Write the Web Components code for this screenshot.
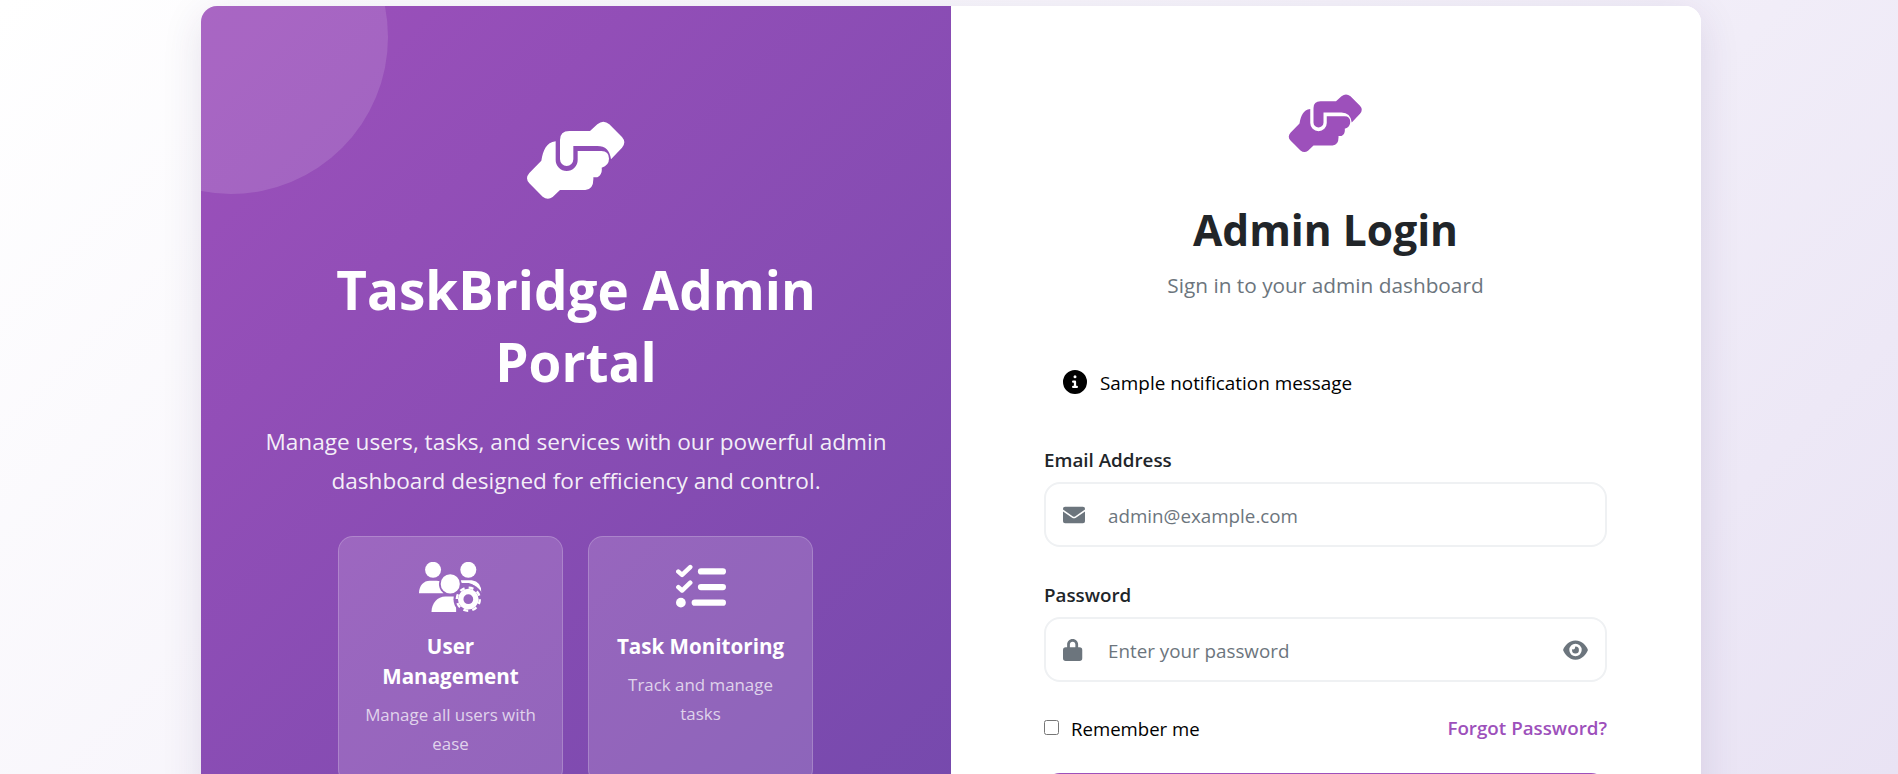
<!DOCTYPE html>
<html lang="en">
<head>
<meta charset="utf-8">
<title>TaskBridge Admin Login</title>
<style>
  html, body { height: 100%; margin: 0; overflow: hidden; }
  body {
    font-family: "Open Sans", "Noto Sans", sans-serif;
    background: linear-gradient(135deg, #ffffff 0%, #f5f2fa 50%, #e9e3f4 100%);
  }
</style>
</head>
<body>
<login-page>
  <brand-panel slot="brand">
    <feature-card title-text="User Management" desc="Manage all users with ease" icon="users"></feature-card>
    <feature-card title-text="Task Monitoring" desc="Track and manage tasks" icon="tasks"></feature-card>
  </brand-panel>
  <login-panel slot="login"></login-panel>
</login-page>

<script>
// 1. Shared icons
const icons = {
  handshake: `<svg viewBox="48 60 300 240" width="100%" height="100%" fill="currentColor">
    <path d="M150 120 Q150 93 178 93 H240 L262 73 Q280 58 298 73 L336 111 Q350 127 336 143 L303 178 Q298 138 262 138 H190 V178 A20 20 0 0 1 150 178 Z"/>
    <path d="M137 124 V180 A33 33 0 0 0 203 180 V153 H274 Q297 153 297 176 Q297 196 275 203 Q278 224 262 232 H250 Q252 268 226 270 H150 L128 291 Q113 302 98 290 L58 250 Q44 235 58 219 L94 182 C100 150 108 128 137 124 Z"/>
  </svg>`,
  users: `<svg viewBox="0 0 640 512" width="100%" height="100%" fill="currentColor">
    <mask id="m"><rect width="640" height="512" fill="#fff"/><circle cx="505" cy="381" r="152" fill="#000"/>
      <circle cx="320" cy="224" r="116" fill="#000"/></mask>
    <circle cx="144" cy="80" r="82"/><circle cx="505" cy="80" r="82"/>
    <g mask="url(#m)">
      <path d="M0 320 C0 240 50 192 110 192 H180 Q225 192 250 215 V320 Z"/>
      <path d="M400 188 H540 Q640 200 640 320 L610 320 Q590 230 510 215 H440 Z"/>
      <path d="M128 512 C128 420 190 352 270 352 H380 V512 Z"/>
    </g>
    <circle cx="320" cy="224" r="98"/>
    <circle cx="505" cy="381" r="78" fill="none" stroke="currentColor" stroke-width="56"/>
    <circle cx="505" cy="381" r="118" fill="none" stroke="currentColor" stroke-width="24" stroke-dasharray="50 42.7"/>
  </svg>`,
  tasks: `<svg viewBox="0 0 512 512" width="100%" height="100%" fill="currentColor">
    <g fill="none" stroke="currentColor" stroke-width="46" stroke-linecap="round" stroke-linejoin="round">
      <polyline points="24,98 62,132 146,52"/><polyline points="24,258 62,292 146,212"/>
    </g>
    <rect x="224" y="64" width="288" height="64" rx="32"/><rect x="224" y="224" width="288" height="64" rx="32"/>
    <rect x="160" y="384" width="352" height="64" rx="32"/><circle cx="50" cy="416" r="50"/>
  </svg>`,
  envelope: `<svg viewBox="0 0 512 384" width="100%" height="100%" fill="currentColor">
    <path d="M48 0 H464 A48 48 0 0 1 512 48 V64 L280 226 Q256 240 232 226 L0 64 V48 A48 48 0 0 1 48 0 Z"/>
    <path d="M0 108 L212 254 Q256 284 300 254 L512 108 V336 A48 48 0 0 1 464 384 H48 A48 48 0 0 1 0 336 Z"/>
  </svg>`,
  lock: `<svg viewBox="0 0 448 512" width="100%" height="100%" fill="currentColor" preserveAspectRatio="xMinYMid">
    <path fill-rule="evenodd" d="M224 0 C300 0 352 60 352 128 V192 H384 A64 64 0 0 1 448 256 V448 A64 64 0 0 1 384 512 H64 A64 64 0 0 1 0 448 V256 A64 64 0 0 1 64 192 H96 V128 C96 60 148 0 224 0 Z M224 64 C184 64 160 96 160 128 V192 H288 V128 C288 96 264 64 224 64 Z"/>
  </svg>`,
  eye: `<svg viewBox="0 0 576 512" width="100%" height="100%" fill="currentColor">
    <path fill-rule="evenodd" d="M288 32 C208 32 143 68 96 112 C49 155 18 207 3 243 Q-3 256 3 269 C18 305 49 357 96 400 C143 444 208 480 288 480 C368 480 433 444 480 400 C527 357 558 305 573 269 Q579 256 573 243 C558 207 527 155 480 112 C433 68 368 32 288 32 Z M288 112 A144 144 0 1 1 288 400 A144 144 0 1 1 288 112 Z"/>
    <path d="M288 176 Q280 176 278 184 C284 220 256 250 216 240 Q208 238 208 248 A80 80 0 1 0 288 176 Z"/>
  </svg>`,
  info: `<svg viewBox="0 0 512 512" width="100%" height="100%" fill="currentColor">
    <path fill-rule="evenodd" d="M256 0 A256 256 0 1 1 256 512 A256 256 0 1 1 256 0 Z M256 112 A32 32 0 1 0 256 176 A32 32 0 1 0 256 112 Z M216 224 A24 24 0 0 0 216 272 H232 V336 H216 A24 24 0 0 0 216 384 H296 A24 24 0 0 0 296 336 H280 V248 A24 24 0 0 0 256 224 Z"/>
  </svg>`
};

// 2. Components
class LoginPage extends HTMLElement {
  constructor() {
    super();
    this.attachShadow({ mode: 'open' });
    this.shadowRoot.innerHTML = `
      <style>
        :host { display: block; padding: 6px 0 0 201px; }
        .card {
          display: grid;
          grid-template-columns: 750px 750px;
          width: 1500px;
          background: #fff;
          border-radius: 16px;
          overflow: hidden;
          box-shadow: 0 10px 40px rgba(60, 30, 100, 0.12);
        }
      </style>
      <div class="card">
        <slot name="brand"></slot>
        <slot name="login"></slot>
      </div>
    `;
  }
}
customElements.define('login-page', LoginPage);

class BrandPanel extends HTMLElement {
  constructor() {
    super();
    this.attachShadow({ mode: 'open' });
    this.shadowRoot.innerHTML = `
      <style>
        :host {
          display: block;
          position: relative;
          overflow: hidden;
          min-height: 1100px;
          color: #fff;
          text-align: center;
          background: linear-gradient(135deg, #9d50bb 0%, #6e48aa 100%);
          padding-top: 114px;
          box-sizing: border-box;
        }
        .circle {
          position: absolute;
          left: -127px;
          top: -126px;
          width: 314px;
          height: 314px;
          border-radius: 50%;
          background: rgba(255, 255, 255, 0.13);
        }
        .logo { width: 100px; height: 80px; margin: 0 auto 54px; position: relative; }
        h1 { font-size: 53px; line-height: 72px; font-weight: 700; margin: 0 0 24px; position: relative; padding: 0 130px; }
        p { font-size: 22.6px; line-height: 39px; margin: 0 0 36px; padding: 0 60px; color: rgba(255,255,255,.92); position: relative; }
        .grid { display: grid; grid-template-columns: 225px 225px; gap: 25px; justify-content: center; position: relative; padding-right: 1px; }
      </style>
      <div class="circle"></div>
      <div class="logo">${icons.handshake}</div>
      <h1>TaskBridge Admin Portal</h1>
      <p>Manage users, tasks, and services with our powerful admin dashboard designed for efficiency and control.</p>
      <div class="grid"><slot></slot></div>
    `;
  }
}
customElements.define('brand-panel', BrandPanel);

class FeatureCard extends HTMLElement {
  constructor() {
    super();
    this.attachShadow({ mode: 'open' });
    this.shadowRoot.innerHTML = `
      <style>
        :host {
          display: block;
          box-sizing: border-box;
          padding: 25px 24px;
          background: rgba(255, 255, 255, 0.15);
          border: 1px solid rgba(255, 255, 255, 0.2);
          border-radius: 15px;
        }
        .icon { height: 50px; margin-bottom: 19px; display: flex; justify-content: center; }
        .icon.users { width: 62.5px; margin-left: auto; margin-right: auto; }
        .icon.tasks { width: 50px; margin-left: auto; margin-right: auto; }
        h3 { font-size: 20.6px; line-height: 30px; font-weight: 700; margin: 0 0 9px; }
        p { font-size: 16.9px; line-height: 29px; margin: 0; color: rgba(255,255,255,.72); }
      </style>
      <div class="icon"></div>
      <h3></h3>
      <p></p>
    `;
  }
  connectedCallback() {
    const icon = this.shadowRoot.querySelector('.icon');
    const name = this.getAttribute('icon');
    icon.classList.add(name);
    icon.innerHTML = icons[name];
    this.shadowRoot.querySelector('h3').textContent = this.getAttribute('title-text');
    this.shadowRoot.querySelector('p').textContent = this.getAttribute('desc');
  }
}
customElements.define('feature-card', FeatureCard);

class FormField extends HTMLElement {
  constructor() {
    super();
    this.attachShadow({ mode: 'open' });
    this.shadowRoot.innerHTML = `
      <style>
        :host { display: block; margin-bottom: 35px; }
        label { display: block; font-size: 18.8px; line-height: 26px; font-weight: 600; color: #212529; margin-bottom: 9px; }
        .box {
          display: flex;
          align-items: center;
          height: 65px;
          box-sizing: border-box;
          border: 2px solid #eff1f3;
          border-radius: 16px;
          padding: 0 17px;
          background: #fff;
        }
        .lead { flex: none; width: 22px; height: 22px; color: #6c757d; display: flex; align-items: center; }
        input {
          flex: 1;
          min-width: 0;
          margin-left: 23px;
          padding: 2px 0 0;
          border: 0;
          outline: 0;
          background: transparent;
          font: 18.8px "Open Sans", "Noto Sans", sans-serif;
          color: #212529;
        }
        input::placeholder { color: #6c757d; opacity: 1; }
        .trail { flex: none; width: 25px; height: 22px; color: #6c757d; display: none; }
        :host([trail]) .trail { display: block; }
      </style>
      <label></label>
      <div class="box">
        <span class="lead"></span>
        <input>
        <span class="trail">${icons.eye}</span>
      </div>
    `;
  }
  connectedCallback() {
    this.shadowRoot.querySelector('label').textContent = this.getAttribute('label');
    this.shadowRoot.querySelector('.lead').innerHTML = icons[this.getAttribute('icon')];
    const input = this.shadowRoot.querySelector('input');
    input.type = this.getAttribute('type') || 'text';
    input.placeholder = this.getAttribute('placeholder');
  }
}
customElements.define('form-field', FormField);

class LoginPanel extends HTMLElement {
  constructor() {
    super();
    this.attachShadow({ mode: 'open' });
    this.shadowRoot.innerHTML = `
      <style>
        :host { display: block; background: #fff; padding: 87px 94px 0 93px; text-align: center; box-sizing: border-box; }
        .logo { width: 75px; height: 60px; margin: 0 auto 47px; color: #9d50bb; }
        h2 { font-size: 42.5px; line-height: 60px; font-weight: 700; color: #212529; margin: 0 0 11px; }
        .sub { font-size: 20.8px; line-height: 29px; color: #6c757d; margin: 0 0 65px; }
        .alert { display: flex; align-items: center; gap: 13px; padding-left: 19px; height: 36px; margin-bottom: 46px; color: #000; font-size: 18.9px; }
        .alert svg { width: 24px; height: 24px; flex: none; margin-top: -2px; }
        form { text-align: left; }
        .row { display: flex; justify-content: space-between; align-items: center; height: 26px; margin-top: -2px; font-size: 18.6px; }
        .remember { display: flex; align-items: center; gap: 12px; color: #000; }
        .remember input { width: 15px; height: 15px; margin: -2px 0 0; }
        a { color: #9d50bb; text-decoration: none; font-weight: 600; font-size: 18.8px; }
        button {
          display: block;
          width: 100%;
          height: 60px;
          margin-top: 32px;
          border: 0;
          border-radius: 16px;
          background: #9d50bb;
        }
      </style>
      <div class="logo">${icons.handshake}</div>
      <h2>Admin Login</h2>
      <div class="sub">Sign in to your admin dashboard</div>
      <div class="alert">${icons.info}<span>Sample notification message</span></div>
      <form>
        <form-field label="Email Address" icon="envelope" type="email" placeholder="admin@example.com"></form-field>
        <form-field label="Password" icon="lock" type="password" placeholder="Enter your password" trail></form-field>
        <div class="row">
          <label class="remember"><input type="checkbox">Remember me</label>
          <a href="#">Forgot Password?</a>
        </div>
        <button type="button" aria-label="Sign in"></button>
      </form>
    `;
  }
}
customElements.define('login-panel', LoginPanel);
</script>
</body>
</html>
